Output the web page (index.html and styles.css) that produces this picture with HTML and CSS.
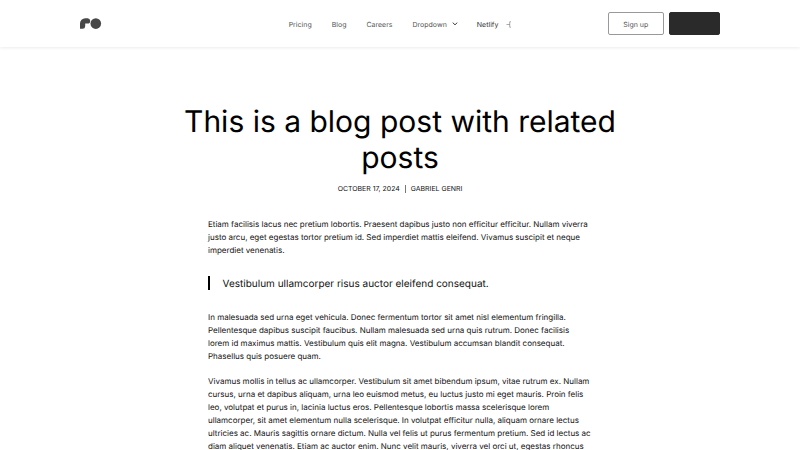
FILE: index.html
```html
<!DOCTYPE html>
<html lang="en">
<head>
<meta charset="utf-8">
<title>This is a blog post with related posts</title>
<link rel="stylesheet" href="styles.css">
</head>
<body>
<header class="header">
  <a class="logo" aria-label="Home"><svg width="22" height="12" viewBox="0 0 22 12"><path d="M0 10.800V5.500A5.300 5.300 0 0 1 5.300.2H7.600A2.700 2.700 0 0 1 10.200 2.800V3A2.600 2.600 0 0 1 7.600 5.600H5.200V8.300A2.600 2.600 0 0 1 2.600 10.800Z"/><circle cx="15.800" cy="5.600" r="5.300"/></svg></a>
  <nav class="nav">
    <a>Pricing</a><a>Blog</a><a>Careers</a>
    <a class="with-icon">Dropdown<svg class="chevron" width="6" height="4" viewBox="0 0 6 4"><path d="M1 .900 3 2.800 5 .900"/></svg></a>
    <a class="with-icon netlify">Netlify<svg class="mark" width="6" height="7" viewBox="0 0 6 7"><path d="M.5 3.500H4M3.700.800V6.200M3.700.800H5M3.700 6.200H5"/></svg></a>
  </nav>
  <div class="actions"><a class="button">Sign up</a><a class="button dark"></a></div>
</header>
<main>
  <h1>This is a blog post with related posts</h1>
  <div class="meta"><span>OCTOBER 17, 2024</span><span class="divider"></span><span>GABRIEL GENRI</span></div>
  <article>
    <p>Etiam facilisis lacus nec pretium lobortis. Praesent dapibus justo non efficitur efficitur. Nullam viverra justo arcu, eget egestas tortor pretium id. Sed imperdiet mattis eleifend. Vivamus suscipit et neque imperdiet venenatis.</p>
    <blockquote>Vestibulum ullamcorper risus auctor eleifend consequat.</blockquote>
    <p>In malesuada sed urna eget vehicula. Donec fermentum tortor sit amet nisl elementum fringilla. Pellentesque dapibus suscipit faucibus. Nullam malesuada sed urna quis rutrum. Donec facilisis lorem id maximus mattis. Vestibulum quis elit magna. Vestibulum accumsan blandit consequat. Phasellus quis posuere quam.</p>
    <p>Vivamus mollis in tellus ac ullamcorper. Vestibulum sit amet bibendum ipsum, vitae rutrum ex. Nullam cursus, urna et dapibus aliquam, urna leo euismod metus, eu luctus justo mi eget mauris. Proin felis leo, volutpat et purus in, lacinia luctus eros. Pellentesque lobortis massa scelerisque lorem ullamcorper, sit amet elementum nulla scelerisque. In volutpat efficitur nulla, aliquam ornare lectus ultricies ac. Mauris sagittis ornare dictum. Nulla vel felis ut purus fermentum pretium. Sed id lectus ac diam aliquet venenatis. Etiam ac auctor enim. Nunc velit mauris, viverra vel orci ut, egestas rhoncus</p>
  </article>
</main>
</body>
</html>
```
FILE: styles.css
```css
* { box-sizing: border-box; }
body { margin: 0; height: 450px; overflow: hidden; background: #fff; color: #000; font-family: Inter, sans-serif; text-rendering: geometricPrecision; }
.header { height: 47px; padding: 0 80px; display: grid; grid-template-columns: 1fr auto 1fr; align-items: center; box-shadow: 0 1px 3px rgba(0,0,0,.08); color: #555; font-size: 7px; }
.logo svg { display: block; fill: #484848; }
.nav { display: flex; gap: 20px; align-items: center; padding-top: 1px; padding-left: 1px; }
.with-icon { display: flex; align-items: center; gap: 5px; }
.netlify { gap: 8px; color: #333; margin-left: -1px; }
.chevron, .mark { fill: none; stroke: #404040; stroke-linecap: round; }
.mark { stroke: #888; stroke-width: .7px; stroke-linecap: butt; }
.actions { display: flex; gap: 5px; justify-content: flex-end; }
.button { width: 56.500px; height: 23px; padding-top: 1px; display: flex; align-items: center; justify-content: center; border: 1px solid #999; border-radius: 2px; }
.dark { width: 51px; background: #2a2a2a; border-color: #2a2a2a; }
h1 { width: 480px; margin: 57px auto 0; text-align: center; font-size: 30px; line-height: 36.300px; font-weight: 400; }
.meta { display: flex; justify-content: center; align-items: center; gap: 5px; font-size: 6.950px; line-height: 10px; margin-top: 7.400px; color: #111; }
.divider { width: 1px; height: 8px; background: #777; }
article { width: 384px; margin: 24px auto 0; font-size: 8px; line-height: 13px; color: #111; }
p { margin: 0 0 12px; }
blockquote { margin: 19px 0 21px; padding-left: 12.500px; border-left: 2px solid #000; font-size: 10px; line-height: 16px; height: 14px; }
```
